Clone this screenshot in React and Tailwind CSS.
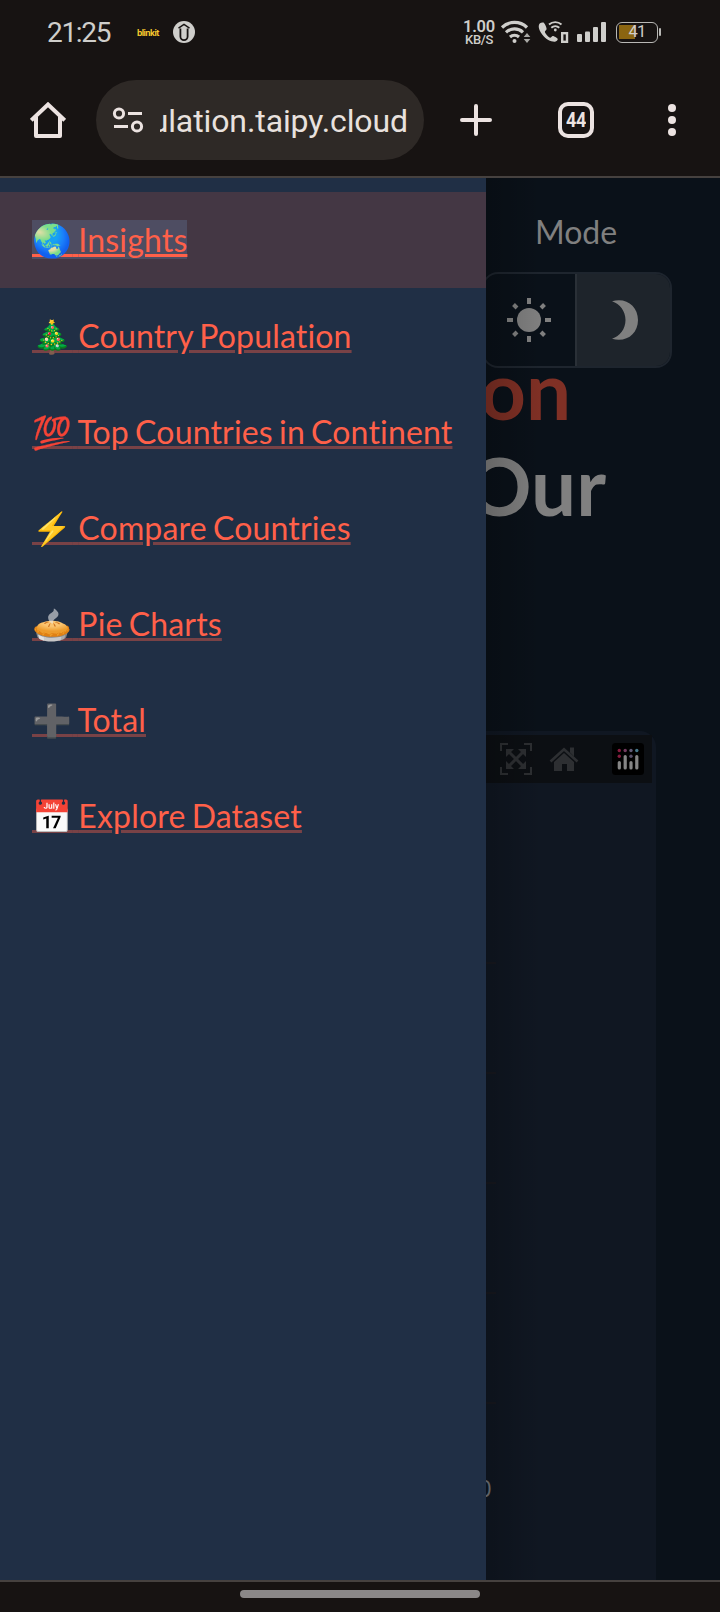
import React from "react";

const ITEMS = [
  { emoji: "🌏", label: "Insights", active: true },
  { emoji: "🎄", label: "Country Population" },
  { emoji: "💯", label: "Top Countries in Continent" },
  { emoji: "⚡", label: "Compare Countries" },
  { emoji: "🥧", label: "Pie Charts" },
  { emoji: "➕", label: "Total" },
  { emoji: "📅", label: "Explore Dataset" },
];

function StatusBar() {
  return (
    <div className="flex h-16 items-center pl-[47px] font-[Roboto,sans-serif] text-[#cfcecb]">
      <span className="mt-[2px] w-[66px] text-[28px] leading-[32px] tracking-[-1.3px]">21:25</span>
      <span className="mt-[2px] ml-6 w-6 font-[Inter,sans-serif] text-[8.500px] leading-[10px] font-bold tracking-[-0.55px] text-[#f6c92f]">blinkit</span>
      <svg className="ml-3 h-[22px] w-[22px] shrink-0" viewBox="0 0 22 22">
        <circle cx="11" cy="11" r="11" fill="#cfcecb" />
        <path d="M5.500 7.200 11 3.500l5.500 3.700" fill="none" stroke="#171312" strokeWidth="1.500" />
        <path d="M7.400 7.500v8a3.600 3.600 0 0 0 7.200 0v-8" fill="none" stroke="#171312" strokeWidth="1.800" />
      </svg>
      <div className="ml-[267px] flex w-[34px] shrink-0 flex-col items-center pt-[2px] font-semibold">
        <span className="text-[16.500px] leading-[13px] tracking-[-0.2px]">1.00</span>
        <span className="text-[13px] leading-[13px] font-medium tracking-[-0.4px]">KB/S</span>
      </div>
      <svg className="ml-[4px] h-[26px] w-[32px] shrink-0" viewBox="0 0 32 26" fill="none" stroke="#cfcecb" strokeWidth="3.200">
        <path d="M2 8.500a18 18 0 0 1 25 0M6 13.300a12.500 12.500 0 0 1 17 0M10 18a7 7 0 0 1 9 0" />
        <circle cx="14.500" cy="22" r="2" fill="#cfcecb" stroke="none" />
        <path d="m27 14 3.300 4h-6.600zM27 24l3.300-4h-6.600z" fill="#a9a8a5" stroke="none" />
      </svg>
      <svg className="ml-[5px] h-[24px] w-[32px] shrink-0" viewBox="0 0 32 24" fill="none" stroke="#cfcecb">
        <path d="M3 3.200C1 5 1.200 9 5.200 14.500c4 5.200 9 7.500 12.800 7.200 1.500-.2 2.800-1.700 2.800-2.700 0-.8-4-3.300-5-3.100-1 .2-1.800 1.800-2.600 1.800-1.300 0-5.400-4.500-5.300-6 0-.8 1.700-1.500 1.700-2.600C9.600 7.500 7.500 3 6.400 2.600 5.600 2.300 4 2.400 3 3.200z" fill="#cfcecb" stroke="none" />
        <path d="M12 4.500a9.500 9.500 0 0 1 12.500 0M14.300 7.800a6 6 0 0 1 8 0" strokeWidth="1.900" />
        <circle cx="18.300" cy="10" r="1.400" fill="#cfcecb" stroke="none" />
        <rect x="25.200" y="13.200" width="4.800" height="8.600" strokeWidth="2.400" />
      </svg>
      <svg className="ml-[8px] h-5 w-[29px] shrink-0" viewBox="0 0 29 20" fill="#cfcecb">
        <rect x="0" y="12" width="5" height="8" rx="1" />
        <rect x="8" y="9.500" width="5" height="10.500" rx="1" />
        <rect x="16" y="5" width="5" height="15" rx="1" />
        <rect x="24" y="0" width="5" height="20" rx="1" />
      </svg>
      <div className="ml-[10px] flex items-center">
        <div className="flex h-[21px] w-[42px] items-center justify-center rounded-[6px] border-[1.5px] border-[#b9b8b5] bg-[linear-gradient(#8b6511,#8b6511)] bg-size-[16px_14px] bg-position-[2px_2px] bg-no-repeat pt-px text-[16.500px] leading-none tracking-[-0.7px]">
          41
        </div>
        <div className="ml-px h-2 w-[2px] rounded bg-[#b9b8b5]" />
      </div>
    </div>
  );
}

function BrowserBar() {
  return (
    <div className="flex h-28 items-center text-[#ece3e1]">
      <svg className="ml-[30px] h-9 w-9" viewBox="0 0 36 36" fill="none" stroke="#ece3e1" strokeWidth="4" strokeLinejoin="round">
        <path d="M1.300 18.300 18 2.500l16.700 15.800" strokeLinejoin="miter" />
        <path d="M6 15v19h24V15" />
      </svg>
      <div className="ml-[30px] flex h-20 w-[328px] items-center rounded-full bg-[#2e2926]">
        <svg className="ml-4 h-7 w-8" viewBox="0 0 32 28" fill="none" stroke="#ece3e1" strokeWidth="3">
          <circle cx="7" cy="7.500" r="4.600" />
          <path d="M16 7.500h14M2 20.500h14" />
          <circle cx="25" cy="20.500" r="4.600" />
        </svg>
        <div className="mt-[2px] ml-4 flex h-10 w-[248px] justify-end overflow-hidden font-[Roboto,sans-serif] text-[32px] leading-10 tracking-[-0.1px] whitespace-nowrap text-[#e8e1de]">
          ulation.taipy.cloud
        </div>
      </div>
      <svg className="ml-9 h-8 w-8" viewBox="0 0 32 32" stroke="#ece3e1" strokeWidth="4" strokeLinecap="round">
        <path d="M16 2v28M2 16h28" />
      </svg>
      <div className="ml-[66px] flex h-9 w-9 items-center justify-center rounded-[10px] border-4 border-[#ece3e1] text-[20px] leading-none font-bold">
        <span className="scale-x-90 font-[Roboto,sans-serif] tracking-[-0.5px]">44</span>
      </div>
      <svg className="ml-[74px] h-8 w-2" viewBox="0 0 8 32" fill="#ece3e1">
        <circle cx="4" cy="4" r="4" />
        <circle cx="4" cy="16" r="4" />
        <circle cx="4" cy="28" r="4" />
      </svg>
    </div>
  );
}

function Drawer() {
  return (
    <nav className="w-[486px] shrink-0 bg-[#202f45] pt-[14px] font-[Lato,sans-serif] text-[32px] tracking-[0.17px] whitespace-nowrap text-[#ff6049] [font-variant-ligatures:none] [word-spacing:-2.2px]">
      {ITEMS.map((item) => (
        <div
          key={item.label}
          className={item.active ? "flex h-24 items-center bg-[#443744] pl-8" : "flex h-24 items-center pl-8"}
        >
          <div className="leading-[48px]">
            <a
              className={
                item.active
                  ? "bg-[#4e4d62] underline decoration-[#ff6049]"
                  : "underline decoration-[#ff6049]/40"
              }
            >
              {item.emoji} {item.label}
            </a>
          </div>
        </div>
      ))}
    </nav>
  );
}

function ModeToggle() {
  return (
    <div className="-ml-1 flex h-24 w-[190px] overflow-hidden rounded-2xl border-2 border-[#1e252e]">
      <div className="flex w-[93px] items-center justify-center border-r-2 border-[#2a3037]">
        <svg className="-ml-px h-11 w-11" viewBox="0 0 44 44" stroke="#808080" strokeWidth="4">
          <circle cx="22" cy="22" r="12" fill="#808080" stroke="none" />
          <path d="M22 0v6M22 38v6M0 22h6M38 22h6M6.500 6.500l3.500 3.500M34 34l3.500 3.500M37.500 6.500 34 10M10 34l-3.500 3.500" />
        </svg>
      </div>
      <div className="flex flex-1 items-center justify-center bg-[#1e242b]">
        <svg className="ml-0.5 h-10 w-[26px]" viewBox="0 0 26 40" fill="#808080">
          <path d="M0 1.200C14-3 26 6 26 20S14 43 0 38.800C8 36 13.500 29 13.500 20S8 4 0 1.200z" />
        </svg>
      </div>
    </div>
  );
}

function ChartCard() {
  return (
    <div className="mt-[198px] flex w-[170px] flex-1 flex-col rounded-tr-2xl bg-[#101722] pt-1 pr-1">
      <div className="flex h-12 items-center bg-[#0c0f13]">
        <svg className="ml-[14px] h-8 w-8" viewBox="0 0 32 32" fill="none" stroke="#2d2f32" strokeWidth="2">
          <path d="M1 8V1h7M24 1h7v7M31 24v7h-7M8 31H1v-7" />
          <path d="m9 9 14 14M23 9 9 23" strokeWidth="3" />
          <path d="M6 6h8l-8 8zM26 6h-8l8 8zM26 26h-8l8-8zM6 26h8l-8-8z" fill="#2d2f32" stroke="none" />
        </svg>
        <svg className="ml-[17px] h-6 w-[30px]" viewBox="0 0 30 24" fill="#2d2f32">
          <path d="M1.500 14.500 15 2.200l13.500 12.300" fill="none" stroke="#2d2f32" strokeWidth="2.600" />
          <path d="M21 0.500h4v9l-4-4zM15 6l10 9v9h-7v-7h-5v7H5v-9z" />
        </svg>
        <svg className="ml-[33px] h-8 w-8" viewBox="0 0 32 32">
          <rect width="32" height="32" rx="3.500" fill="#000" />
          <g stroke="#858585" strokeWidth="3.200" strokeLinecap="round">
            <path d="M7.300 19.500v5.500M13.200 13.500V25M19 19.500v5.500M24.800 13.500V25" />
          </g>
          <circle cx="7.300" cy="7.500" r="1.700" fill="#851d3f" />
          <circle cx="13.200" cy="7.500" r="1.700" fill="#713b5e" />
          <circle cx="19" cy="7.500" r="1.700" fill="#615c78" />
          <circle cx="24.800" cy="7.500" r="1.700" fill="#47788a" />
          <circle cx="7.300" cy="13.300" r="1.700" fill="#851d3f" />
          <circle cx="19" cy="13.300" r="1.700" fill="#58506b" />
        </svg>
      </div>
      <div className="mt-[179px] flex h-[442px] w-[10px] flex-col justify-between">
        {[0, 1, 2, 3, 4].map((n) => (
          <div key={n} className="h-[2px] bg-[#17181f]" />
        ))}
      </div>
      <div className="mt-[72px] -ml-[8px] font-[Open_Sans,sans-serif] text-[24px] leading-[24px] text-[#75787d]">0</div>
    </div>
  );
}

function Page() {
  return (
    <main className="relative flex flex-1 flex-col overflow-hidden bg-[#0a1119]">
      <div className="mt-[30px] ml-[49px] font-[Lato,sans-serif] text-[32px] leading-[48px] text-[#808080]">Mode</div>
      <div className="mt-4">
        <ModeToggle />
      </div>
      <h1 className="-mt-[27px] font-[Lato,sans-serif] text-[80px] leading-[96px] font-bold text-[#808080]">
        <div className="-ml-[6px] text-[#803025]">on</div>
        <div className="-ml-[19px]">Our</div>
      </h1>
      <ChartCard />
      <div className="absolute inset-y-0 left-0 w-14 bg-linear-to-r from-black/20 to-transparent" />
    </main>
  );
}

export default function App() {
  return (
    <div className="flex h-[1612px] w-[720px] flex-col overflow-hidden bg-[#171312]">
      <header className="h-[178px] shrink-0 border-b-2 border-[#46413f]">
        <StatusBar />
        <BrowserBar />
      </header>
      <div className="flex h-[1402px] shrink-0">
        <Drawer />
        <Page />
      </div>
      <footer className="flex flex-1 justify-center border-t-2 border-[#46413f] pt-2">
        <div className="h-2 w-60 rounded-full bg-[#8b8888]" />
      </footer>
    </div>
  );
}
